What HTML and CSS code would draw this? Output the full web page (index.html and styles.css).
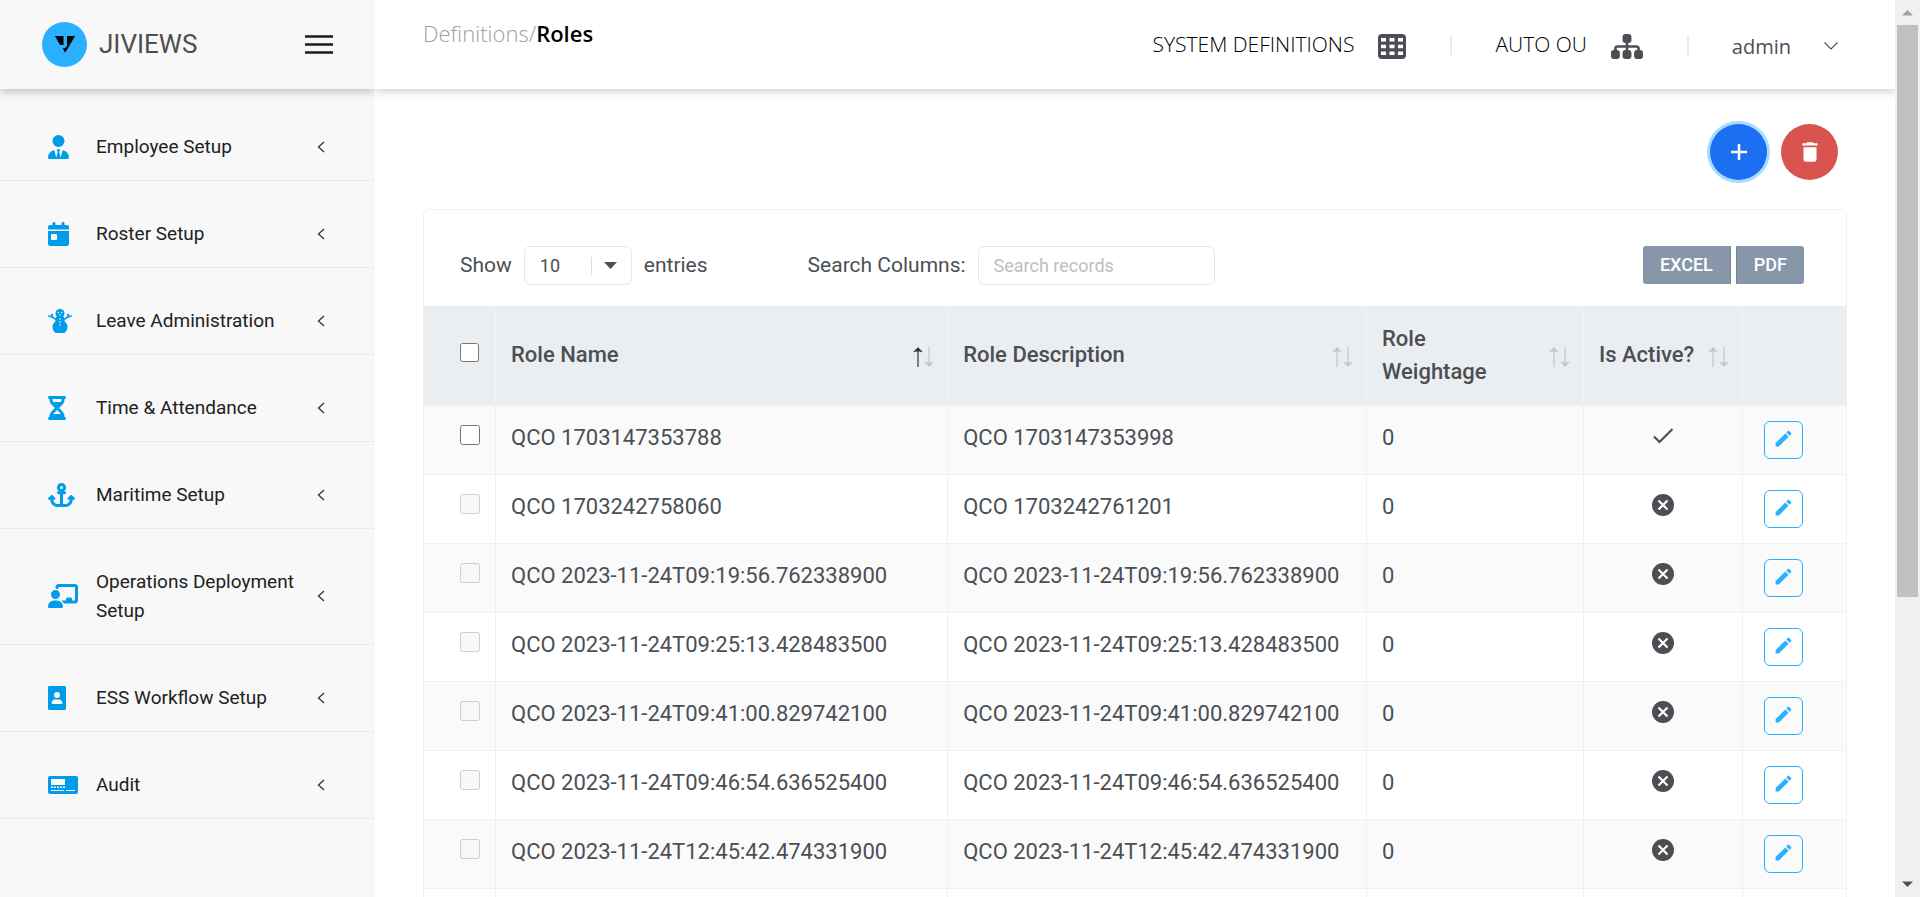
FILE: index.html
```html
<!DOCTYPE html>
<html lang="en">
<head>
<meta charset="utf-8">
<title>Roles</title>
<link rel="stylesheet" href="styles.css">
</head>
<body>
<svg class="sprite" aria-hidden="true">
  <symbol id="i-back" viewBox="0 0 8 12"><path d="M7 1L1.500 6 7 11" fill="none" stroke="#333" stroke-width="1.300"/></symbol>
  <symbol id="i-edit" viewBox="0 0 24 24"><path d="M3 17.250V21h3.750L17.810 9.940l-3.750-3.750L3 17.250zM20.710 7.040c.39-.39.39-1.020 0-1.410l-2.340-2.340c-.39-.39-1.020-.39-1.410 0l-1.830 1.830 3.750 3.750 1.830-1.830z"/></symbol>
  <symbol id="i-no" viewBox="0 0 22 22"><circle cx="11" cy="11" r="11" fill="#4b4f54"/><path d="M6.500 6.500l9 9M15.500 6.500l-9 9" stroke="#fff" stroke-width="2.200" fill="none"/></symbol>
  <symbol id="i-yes" viewBox="0 0 22 22"><path d="M2 11.500l5.500 5.500L20.500 4" stroke="#4b4f54" stroke-width="2.200" fill="none"/></symbol>
  <symbol id="i-sort" viewBox="0 0 22 20"><path d="M5 1v19M1 5l4-4 4 4" fill="none" stroke="currentColor" stroke-width="1.200"/><path d="M2 4.500L5 .5l3 4z" fill="currentColor"/></symbol>
  <symbol id="i-sortd" viewBox="0 0 22 20"><path d="M16 0v19M12 15l4 4 4-4" fill="none" stroke="currentColor" stroke-width="1.200"/><path d="M13 15.500l3 4 3-4z" fill="currentColor"/></symbol>
</svg>
<div class="app">
  <aside class="sidebar">
    <div class="brand">
      <svg class="logo" viewBox="0 0 45 45"><circle cx="22.500" cy="22.500" r="22.500" fill="#29b1ff"/><path d="M13 14h8.500v9H18zM25 14h8l-7.500 13-2.500 3.500-2.300-4.300h2l2.300-2.200z"/></svg>
      <span class="brand-name">JIVIEWS</span>
      <button class="burger" aria-label="Toggle menu"><svg viewBox="0 0 28 19"><path d="M0 1.500h28M0 9.500h28M0 17.500h28" stroke="#1b1b1f" stroke-width="2.600"/></svg></button>
    </div>
    <nav class="menu">
      <a href="#"><svg class="ic" viewBox="0 0 448 512" width="21"><path d="M96 128a128 128 0 1 0 256 0A128 128 0 1 0 96 128zm94.500 200.200l18.600 31L175.800 483.100l-36-146.900c-2-8.100-9.800-13.400-17.900-11.300C51.900 342.400 0 405.800 0 481.300c0 17 13.800 30.700 30.700 30.700H417.300c17 0 30.700-13.800 30.700-30.700c0-75.500-51.900-138.900-121.900-156.400c-8.100-2-15.900 3.300-17.900 11.300l-36 146.900L238.900 359.200l18.600-31c6.400-10.700-1.300-24.200-13.700-24.200H204.300c-12.400 0-20.100 13.600-13.700 24.200z"/></svg><span>Employee Setup</span><svg class="back"><use href="#i-back"/></svg></a>
      <a href="#"><svg class="ic" viewBox="0 0 448 512" width="21"><path d="M128 0c17.700 0 32 14.300 32 32V64H288V32c0-17.700 14.300-32 32-32s32 14.300 32 32V64h48c26.500 0 48 21.500 48 48v48H0V112C0 85.500 21.500 64 48 64H96V32c0-17.700 14.300-32 32-32zM0 192H448V464c0 26.500-21.500 48-48 48H48c-26.500 0-48-21.500-48-48V192zm80 64c-8.800 0-16 7.200-16 16v96c0 8.800 7.200 16 16 16h96c8.800 0 16-7.200 16-16V272c0-8.800-7.200-16-16-16H80z"/></svg><span>Roster Setup</span><svg class="back"><use href="#i-back"/></svg></a>
      <a href="#"><svg class="ic" viewBox="0 0 24 24" width="24"><circle cx="12" cy="4.500" r="4.500"/><path d="M8 8h8l.8 5c1.700 1.200 2.700 2.800 2.700 4.900 0 2.500-1.300 4.600-3 6.100h-9c-1.700-1.500-3-3.600-3-6.100 0-2.100 1-3.700 2.700-4.900z"/><path d="M8 10.500L4 7.800 1 7M4 7.500V5.500M16 10.500l4-2.700L23 7M20 7.500V5.500" fill="none" stroke="#009ce9" stroke-width="1.800" stroke-linecap="round"/><g fill="#f8f8f8"><circle cx="10.300" cy="3.500" r=".8"/><circle cx="13.700" cy="3.500" r=".8"/><path d="M11.200 5.200h1.600L12 7.200z"/><circle cx="12" cy="10" r=".8"/><circle cx="12" cy="13" r=".8"/><circle cx="12" cy="16" r=".8"/></g></svg><span>Leave Administration</span><svg class="back"><use href="#i-back"/></svg></a>
      <a href="#"><svg class="ic" viewBox="0 0 384 512" width="18"><path d="M32 0C14.300 0 0 14.300 0 32S14.300 64 32 64V75c0 42.400 16.900 83.100 46.900 113.100L146.700 256 78.900 323.900C48.900 353.900 32 394.600 32 437v11c-17.700 0-32 14.300-32 32s14.300 32 32 32H352c17.700 0 32-14.300 32-32s-14.300-32-32-32V437c0-42.400-16.900-83.100-46.900-113.100L237.300 256l67.900-67.900c30-30 46.900-70.700 46.900-113.100V64c17.700 0 32-14.300 32-32s-14.300-32-32-32H32zM96 75V64H288V75c0 19-5.600 37.400-16 53H112c-10.300-15.600-16-34-16-53zm16 309c3.500-5.300 7.600-10.300 12.100-14.900L192 301.300l67.900 67.900c4.600 4.600 8.600 9.600 12.100 14.900H112z"/></svg><span>Time &amp; Attendance</span><svg class="back"><use href="#i-back"/></svg></a>
      <a href="#"><svg class="ic" viewBox="0 0 576 512" width="27"><path d="M320 96a32 32 0 1 1 -64 0 32 32 0 1 1 64 0zm21.100 80C367 158.800 384 129.400 384 96c0-53-43-96-96-96s-96 43-96 96c0 33.400 17 62.800 42.900 80H224c-17.700 0-32 14.300-32 32s14.300 32 32 32h32V448H208c-53 0-96-43-96-96v-6.100l7 7c9.400 9.400 24.600 9.400 33.900 0s9.400-24.600 0-33.900L97 263c-9.400-9.400-24.600-9.400-33.900 0L7 319c-9.400 9.400-9.400 24.600 0 33.900s24.600 9.400 33.900 0l7-7V352c0 88.400 71.600 160 160 160h160c88.400 0 160-71.600 160-160v-6.100l7 7c9.400 9.400 24.600 9.400 33.900 0s9.400-24.600 0-33.900l-56-56c-9.400-9.400-24.600-9.400-33.900 0l-56 56c-9.400 9.400-9.400 24.600 0 33.900s24.600 9.400 33.900 0l7-7V352c0 53-43 96-96 96H320V240h32c17.700 0 32-14.300 32-32s-14.300-32-32-32H341.100z"/></svg><span>Maritime Setup</span><svg class="back"><use href="#i-back"/></svg></a>
      <a href="#"><svg class="ic" viewBox="0 0 640 512" width="30"><path d="M160 64c0-35.300 28.700-64 64-64H576c35.300 0 64 28.700 64 64V352c0 35.300-28.700 64-64 64H336.800c-11.800-25.500-29.900-47.500-52.400-64H384V320c0-17.700 14.300-32 32-32h64c17.700 0 32 14.300 32 32v32h64V64L224 64v49.100C205.200 102.200 183.300 96 160 96V64zm0 64a96 96 0 1 1 0 192 96 96 0 1 1 0-192zM133.300 352h53.300C260.300 352 320 411.700 320 485.300c0 14.700-11.900 26.700-26.700 26.700H26.700C11.900 512 0 500.100 0 485.300C0 411.700 59.700 352 133.300 352z"/></svg><span>Operations Deployment Setup</span><svg class="back"><use href="#i-back"/></svg></a>
      <a href="#"><svg class="ic" viewBox="0 0 384 512" width="18"><path d="M384 32c0-17.700-14.300-32-32-32H32C14.300 0 0 14.300 0 32V480c0 17.700 14.300 32 32 32H352c17.700 0 32-14.300 32-32V32zM128 192a64 64 0 1 1 128 0 64 64 0 1 1 -128 0zM80 356.600c0-37.900 30.700-68.600 68.600-68.600h86.900c37.900 0 68.600 30.700 68.600 68.600v27.400H80z"/></svg><span>ESS Workflow Setup</span><svg class="back"><use href="#i-back"/></svg></a>
      <a href="#"><svg class="ic" viewBox="0 0 30 24" width="30"><rect y="3" width="30" height="18" rx="2"/><path d="M3 6h14v6H3zM3 13.500h2V15H3zM6 13.500h2V15H6zM9 13.500h2V15H9zM12 13.500h2V15h-2zM15 13.500h2V15h-2zM3 17h13v1H3zM18 17h9v1h-9z" fill="#f8f8f8"/></svg><span>Audit</span><svg class="back"><use href="#i-back"/></svg></a>
    </nav>
  </aside>

  <div class="page">
    <header class="topbar">
      <div class="crumbs"><a href="#">Definitions/</a><strong>Roles</strong></div>
      <div class="top-links">
        <a class="top-link" href="#">SYSTEM DEFINITIONS
          <svg width="28" height="25" viewBox="0 0 28 25"><rect width="28" height="25" rx="4" fill="#4b4f54"/><path d="M3 4h5v3.500H3zM11.500 4h5v3.500h-5zM20 4h5v3.500h-5zM3 10.800h5v3.500H3zM11.500 10.800h5v3.500h-5zM20 10.800h5v3.500h-5zM3 17.500h5V21H3zM11.500 17.500h5V21h-5zM20 17.500h5V21h-5z" fill="#fff"/></svg></a>
        <a class="top-link" href="#">AUTO OU
          <svg width="32" height="25" viewBox="0 32 576 448" preserveAspectRatio="none"><path fill="#4b4f54" d="M208 80c0-26.500 21.500-48 48-48h64c26.500 0 48 21.500 48 48v64c0 26.500-21.500 48-48 48h-8v40H464c30.900 0 56 25.100 56 56v32h8c26.500 0 48 21.500 48 48v64c0 26.500-21.500 48-48 48H464c-26.500 0-48-21.500-48-48V368c0-26.500 21.500-48 48-48h8V288c0-4.400-3.600-8-8-8H312v40h8c26.500 0 48 21.500 48 48v64c0 26.500-21.500 48-48 48H256c-26.500 0-48-21.500-48-48V368c0-26.500 21.500-48 48-48h8V280H112c-4.400 0-8 3.600-8 8v32h8c26.500 0 48 21.500 48 48v64c0 26.500-21.500 48-48 48H48c-26.500 0-48-21.500-48-48V368c0-26.500 21.500-48 48-48h8V288c0-30.900 25.100-56 56-56H264V192h-8c-26.500 0-48-21.500-48-48V80z"/></svg></a>
        <button class="user">admin <svg width="14" height="8" viewBox="0 0 14 8"><path d="M.5.5L7 7 13.500.5" fill="none" stroke="#4b4f54" stroke-width="1.100"/></svg></button>
      </div>
    </header>

    <main class="content">
      <div class="actions">
        <button class="fab add" aria-label="Add role"><svg width="18" height="18" viewBox="0 0 18 18"><path d="M9 1v16M1 9h16" stroke="#fff" stroke-width="2.500"/></svg></button>
        <button class="fab del" aria-label="Delete roles"><svg width="26" height="26" viewBox="0 0 24 24"><path fill="#fff" d="M6 19c0 1.100.9 2 2 2h8c1.100 0 2-.9 2-2V7.500H6V19zM19 4h-3.500l-1-1h-5l-1 1H5v2h14V4z"/></svg></button>
      </div>

      <section class="card">
        <div class="toolbar">
          <label for="size">Show</label>
          <span class="select"><select id="size"><option>10</option></select><svg width="13" height="7" viewBox="0 0 13 7"><path d="M0 0h13L6.500 7z" fill="#4b4f54"/></svg></span>
          <span>entries</span>
          <label class="search-label" for="search">Search Columns:</label>
          <input class="search" id="search" type="text" placeholder="Search records">
          <div class="export"><button>EXCEL</button><button>PDF</button></div>
        </div>
        <table>
          <colgroup><col class="c-check"><col class="c-name"><col><col class="c-weight"><col class="c-active"><col class="c-edit"></colgroup>
          <thead>
            <tr>
              <th class="check"><input type="checkbox" aria-label="Select all"></th>
              <th><div class="head">Role Name <span class="sort asc"><svg class="up"><use href="#i-sort"/></svg><svg><use href="#i-sortd"/></svg></span></div></th>
              <th><div class="head">Role Description <span class="sort"><svg class="up"><use href="#i-sort"/></svg><svg><use href="#i-sortd"/></svg></span></div></th>
              <th><div class="head"><span>Role<br>Weightage</span> <span class="sort"><svg class="up"><use href="#i-sort"/></svg><svg><use href="#i-sortd"/></svg></span></div></th>
              <th><div class="head">Is Active? <span class="sort"><svg class="up"><use href="#i-sort"/></svg><svg><use href="#i-sortd"/></svg></span></div></th>
              <th></th>
            </tr>
          </thead>
          <tbody>
            <tr><td class="check"><input type="checkbox" aria-label="Select row"></td><td>QCO 1703147353788</td><td>QCO 1703147353998</td><td>0</td><td class="state"><svg><use href="#i-yes"/></svg></td><td class="edit"><button aria-label="Edit"><svg><use href="#i-edit"/></svg></button></td></tr>
            <tr><td class="check"><input type="checkbox" aria-label="Select row" disabled></td><td>QCO 1703242758060</td><td>QCO 1703242761201</td><td>0</td><td class="state"><svg><use href="#i-no"/></svg></td><td class="edit"><button aria-label="Edit"><svg><use href="#i-edit"/></svg></button></td></tr>
            <tr><td class="check"><input type="checkbox" aria-label="Select row" disabled></td><td>QCO 2023-11-24T09:19:56.762338900</td><td>QCO 2023-11-24T09:19:56.762338900</td><td>0</td><td class="state"><svg><use href="#i-no"/></svg></td><td class="edit"><button aria-label="Edit"><svg><use href="#i-edit"/></svg></button></td></tr>
            <tr><td class="check"><input type="checkbox" aria-label="Select row" disabled></td><td>QCO 2023-11-24T09:25:13.428483500</td><td>QCO 2023-11-24T09:25:13.428483500</td><td>0</td><td class="state"><svg><use href="#i-no"/></svg></td><td class="edit"><button aria-label="Edit"><svg><use href="#i-edit"/></svg></button></td></tr>
            <tr><td class="check"><input type="checkbox" aria-label="Select row" disabled></td><td>QCO 2023-11-24T09:41:00.829742100</td><td>QCO 2023-11-24T09:41:00.829742100</td><td>0</td><td class="state"><svg><use href="#i-no"/></svg></td><td class="edit"><button aria-label="Edit"><svg><use href="#i-edit"/></svg></button></td></tr>
            <tr><td class="check"><input type="checkbox" aria-label="Select row" disabled></td><td>QCO 2023-11-24T09:46:54.636525400</td><td>QCO 2023-11-24T09:46:54.636525400</td><td>0</td><td class="state"><svg><use href="#i-no"/></svg></td><td class="edit"><button aria-label="Edit"><svg><use href="#i-edit"/></svg></button></td></tr>
            <tr><td class="check"><input type="checkbox" aria-label="Select row" disabled></td><td>QCO 2023-11-24T12:45:42.474331900</td><td>QCO 2023-11-24T12:45:42.474331900</td><td>0</td><td class="state"><svg><use href="#i-no"/></svg></td><td class="edit"><button aria-label="Edit"><svg><use href="#i-edit"/></svg></button></td></tr>
            <tr class="blank"><td></td><td></td><td></td><td></td><td></td><td></td></tr>
          </tbody>
        </table>
      </section>
    </main>
  </div>

  <div class="scrollbar" aria-hidden="true">
    <svg viewBox="0 0 25 25"><path d="M7 15.500L12.500 10l5.500 5.500z" fill="#a3a3a3"/></svg>
    <div class="track"><div class="thumb"></div></div>
    <svg viewBox="0 0 25 25"><path d="M7 9.500l5.500 5.500L18 9.500z" fill="#505050"/></svg>
  </div>
</div>
</body>
</html>
```
FILE: styles.css
```css
* { box-sizing: border-box; }
body {
  margin: 0;
  background: #fff;
  color: #4b4f54;
  font-family: Roboto, "Liberation Sans", sans-serif;
  font-size: 22px;
  line-height: 33px;
}
a { color: inherit; text-decoration: none; }
button, input, select { font: inherit; color: inherit; }
button { padding: 0; border: 0; background: none; cursor: pointer; }
.sprite { display: none; }

.app {
  display: grid;
  grid-template-columns: 375px minmax(0, 1fr) 25px;
  height: 100vh;
  overflow: hidden;
}

/* sidebar */
.sidebar { background: #f8f8f8; overflow: hidden; }
.brand {
  display: flex;
  align-items: center;
  height: 89px;
  padding: 0 42px;
  box-shadow: 0 3px 8px rgba(0, 0, 0, .22);
}
.logo { width: 45px; height: 45px; }
.brand-name { margin-left: 12px; font-size: 26px; }
.burger { display: flex; margin-left: auto; }
.burger svg { width: 28px; height: 19px; }
.menu { padding-top: 5px; }
.menu a {
  display: grid;
  grid-template-columns: 48px 1fr 8px;
  align-items: center;
  padding: 38px 50px 19px 48px;
  border-bottom: 1px solid #ebebeb;
  color: #212121;
  font-size: 19px;
  line-height: 29px;
}
.ic { height: 24px; fill: #009ce9; }
.back { width: 8px; height: 12px; }

/* top bar */
.page { min-width: 0; overflow: hidden; }
.topbar {
  display: flex;
  justify-content: space-between;
  height: 89px;
  padding: 0 57px 0 48px;
  box-shadow: 0 3px 8px rgba(0, 0, 0, .18);
  font-family: "Segoe UI", "Open Sans", "Noto Sans", sans-serif;
}
.crumbs { padding-top: 17px; font-size: 22px; line-height: 32px; font-weight: 300; color: #a0a0a0; }
.crumbs strong { font-weight: 600; color: #000; }
.top-links { display: flex; align-items: center; }
.top-link, .user { display: flex; align-items: center; gap: 24px; }
.top-link { font-size: 21px; font-weight: 300; color: #000; }
.top-link svg { margin-top: 4px; }
.top-link::after { content: ""; width: 2px; height: 20px; margin: 0 43px 0 20px; background: #ebebeb; }
.user { gap: 33px; padding-top: 3px; font-size: 20px; }

/* page content */
.content { padding: 35px 48px 0; }
.actions { display: flex; justify-content: flex-end; gap: 14px; padding-right: 9px; }
.fab {
  display: flex;
  align-items: center;
  justify-content: center;
  width: 57px;
  height: 56px;
  border-radius: 50%;
}
.add { background: #1d6ff2; box-shadow: 0 0 0 3px #a5dcff; }
.del { background: #d9534f; }
.card {
  margin-top: 29px;
  border: 1px solid #f0f0f0;
  border-radius: 6px;
}
.toolbar {
  display: flex;
  align-items: center;
  gap: 12px;
  padding: 36px 42px 21px 36px;
  font-size: 21px;
}
.select { display: flex; align-items: center; position: relative; width: 108px; height: 39px; }
.select select {
  appearance: none;
  width: 100%;
  height: 100%;
  padding: 0 15px;
  border: 1px solid #e4e6e8;
  border-radius: 6px;
  background: #fff;
  font-size: 18px;
}
.select::before { content: ""; position: absolute; right: 40px; width: 1px; height: 18px; background: #dcdcdc; }
.select svg { position: absolute; right: 15px; pointer-events: none; }
.search-label { margin-left: 88px; }
.search {
  width: 237px;
  height: 39px;
  padding: 0 15px;
  border: 1px solid #e4e6e8;
  border-radius: 6px;
  font-size: 18px;
}
.search::placeholder { color: #bcbec0; }
.export { display: flex; align-self: flex-start; gap: 5px; margin-left: auto; }
.export button {
  height: 38px;
  padding: 0 17px 2px;
  background: #8896aa;
  color: #fff;
  font-size: 18px;
  font-weight: 500;
}
.export button:first-child { border-radius: 3px 0 0 3px; border-right: 1px solid #75859b; }
.export button:last-child { border-radius: 0 3px 3px 0; border-left: 1px solid #75859b; }

/* table */
table { width: 100%; table-layout: fixed; border-collapse: separate; border-spacing: 0; }
.c-check { width: 72px; }
.c-name { width: 31.8%; }
.c-weight { width: 217px; }
.c-active { width: 159px; }
.c-edit { width: 103px; }
th {
  height: 100px;
  padding: 0 12px 0 15px;
  border-bottom: 3px solid #f0f0f0;
  border-right: 1px solid #f2f3f4;
  background: #ebeef1;
  font-weight: 500;
  text-align: left;
}
td {
  height: 69px;
  padding: 15px 12px 0 15px;
  border-bottom: 1px solid #f0f0f0;
  border-right: 1px solid #f0f0f0;
  vertical-align: top;
  white-space: nowrap;
}
th:last-child, td:last-child { border-right: 0; }
tbody tr:nth-child(odd) { background: #fafafa; }
.head { display: flex; align-items: center; justify-content: space-between; }
.sort { display: grid; flex: none; margin-top: 4px; color: #c2c5c9; }
.sort svg { grid-area: 1 / 1; width: 22px; height: 20px; }
.sort.asc .up { color: #33373c; }
th.check { padding: 0 0 4px 36px; }
td.check { padding: 19px 0 0 36px; line-height: 0; }
.check input { display: block; width: 20px; height: 20px; margin: 0; }
th.check input { width: 19px; height: 19px; }
td.state { padding: 19px 0 0; text-align: center; line-height: 0; }
.state svg { width: 22px; height: 22px; }
td.edit { padding: 15px 0 0 21px; }
.edit button {
  display: flex;
  align-items: center;
  justify-content: center;
  width: 39px;
  height: 38px;
  padding-bottom: 4px;
  border: 1px solid #29b1ff;
  border-radius: 6px;
}
.edit svg { width: 21px; height: 21px; fill: #29b1ff; }

/* scrollbar */
.scrollbar { display: flex; flex-direction: column; background: #f0f0f0; }
.scrollbar svg { width: 25px; height: 25px; }
.track { flex: 1; padding: 0 2px; }
.thumb { height: 67.5%; background: #c1c1c1; }
```
